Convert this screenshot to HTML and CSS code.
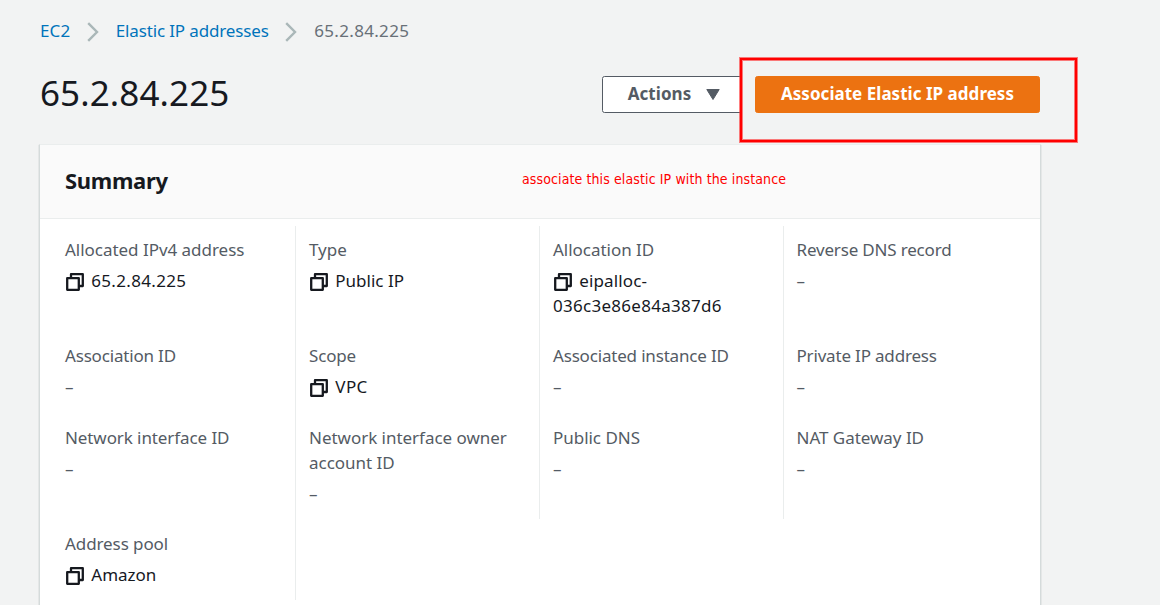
FILE: index.html
```html
<!DOCTYPE html>
<html lang="en">
<head>
<meta charset="utf-8">
<title>Elastic IP address</title>
<link rel="stylesheet" href="styles.css">
</head>
<body>
<svg class="defs" aria-hidden="true">
  <symbol id="copy" viewBox="0 0 18 18"><path d="M5 5V1.2H16.8V13H13M1.2 5.2H12.8V16.8H1.2Z" fill="none" stroke="#16191f" stroke-width="2.3" stroke-linejoin="round"/></symbol>
  <symbol id="chev" viewBox="0 0 12 20"><path d="M1.2 1.2L10 10L1.2 18.8" fill="none" stroke="#aab7b8" stroke-width="2.4"/></symbol>
</svg>
<main class="page">
  <nav class="crumbs">
    <a class="root">EC2</a><svg class="chev"><use href="#chev"/></svg>
    <a>Elastic IP addresses</a><svg class="chev"><use href="#chev"/></svg>
    <span class="current digits">65.2.84.225</span>
  </nav>
  <header class="head">
    <h1>65.2.84.225</h1>
    <div class="actions">
      <button class="btn"><span>Actions</span><svg class="caret" viewBox="0 0 14 11"><path d="M.8 .5H13.2L7 10.5Z" fill="#545b64" stroke="#545b64" stroke-linejoin="round"/></svg></button>
      <div class="target"><button class="btn primary"><span>Associate Elastic IP address</span></button><div class="highlight"></div></div>
    </div>
  </header>
  <section class="card">
    <div class="card-head"><h2>Summary</h2><p class="note">associate this elastic IP with the instance</p></div>
    <div class="grid">
      <div class="cell"><div class="label snug">Allocated IPv4 address</div><div class="value digits"><svg class="copy"><use href="#copy"/></svg>65.2.84.225</div></div>
      <div class="cell"><div class="label snug">Type</div><div class="value"><svg class="copy"><use href="#copy"/></svg>Public IP</div></div>
      <div class="cell"><div class="label snug">Allocation ID</div><div class="value"><svg class="copy"><use href="#copy"/></svg><span class="prefix">eipalloc-</span><br><span class="hash">036c3e86e84a387d6</span></div></div>
      <div class="cell"><div class="label">Reverse DNS record</div><div class="value dash">–</div></div>
      <div class="cell"><div class="label">Association ID</div><div class="value dash">–</div></div>
      <div class="cell"><div class="label">Scope</div><div class="value wide"><svg class="copy"><use href="#copy"/></svg>VPC</div></div>
      <div class="cell"><div class="label">Associated instance ID</div><div class="value dash">–</div></div>
      <div class="cell"><div class="label">Private IP address</div><div class="value dash">–</div></div>
      <div class="cell"><div class="label net">Network interface ID</div><div class="value dash">–</div></div>
      <div class="cell"><div class="label snug">Network interface owner<br>account ID</div><div class="value dash">–</div></div>
      <div class="cell"><div class="label snug">Public DNS</div><div class="value dash">–</div></div>
      <div class="cell"><div class="label snug">NAT Gateway ID</div><div class="value dash">–</div></div>
      <div class="cell"><div class="label net">Address pool</div><div class="value"><svg class="copy"><use href="#copy"/></svg>Amazon</div></div>
    </div>
  </section>
</main>
</body>
</html>
```
FILE: styles.css
```css
* { box-sizing: border-box; }
html, body { margin: 0; height: 605px; overflow: hidden; }
body { background: #f2f3f3; color: #16191f; font: 17px/25px "Noto Sans", "Open Sans", sans-serif; white-space: nowrap; }
.defs { display: none; }
.page { width: 1160px; padding: 18px 120px 0 40px; }
.crumbs { display: flex; align-items: center; height: 25px; color: #0073bb; letter-spacing: -.14px; }
.root { letter-spacing: .1px; }
.crumbs .current { color: #687078; }
.digits { letter-spacing: .32px; }
.chev { width: 12px; height: 20px; margin: 2px 17px 0 16.5px; }
.head { display: flex; justify-content: space-between; align-items: center; height: 37px; margin-top: 33px; }
h1 { margin: 0; padding-bottom: 3px; font-size: 35px; line-height: 44px; font-weight: 400; letter-spacing: .1px; }
.actions { display: flex; gap: 13px; }
.btn { display: flex; align-items: center; justify-content: center; height: 37px; width: 140px; padding: 0; border: 1px solid #545b64; border-radius: 2.5px; background: #fff; color: #545b64; font: 700 17px/25px "Noto Sans", sans-serif; letter-spacing: .07px; }
.btn span { padding-bottom: 2px; }
.caret { width: 14px; height: 11px; margin: 0 0 1px 15px; }
.btn:not(.primary) { padding-left: 4px; }
.primary { width: 285px; border-color: #ec7211; background: #ec7211; color: #fff; letter-spacing: .03px; }
.target { position: relative; }
.highlight { position: absolute; left: -15px; top: -18px; width: 337px; height: 84px; border: 2px solid #f00; box-shadow: 0 0 0 1px rgba(255,0,0,.5), inset 0 0 0 1px rgba(255,0,0,.5); }
.card { width: 1002px; height: 470px; margin: 31px 0 0 -1px; background: #fff; border: 1px solid #d5dbdb; border-top-color: #eaeded; box-shadow: 0 1px 1px rgba(0,28,36,.3); }
.card-head { display: flex; align-items: center; height: 74px; padding-left: 25px; background: #fafafa; border-bottom: 1px solid #eaeded; }
h2 { width: 457px; margin: 0; padding-bottom: 3px; font-size: 22px; line-height: 28px; letter-spacing: -.3px; }
.note { margin: -5px 0 0; color: #f00; font: 14px/20px "DejaVu Sans Condensed", "DejaVu Sans", sans-serif; letter-spacing: .11px; }
.grid { display: grid; grid-template-columns: 256px 244px 244px 256px; padding-top: 7px; }
.cell { padding: 10.5px 0 14.5px 13px; border-right: 1px solid #eaeded; }
.cell:nth-child(n+9) { padding-top: 11.5px; padding-bottom: 12.5px; }
.cell:last-child { padding-top: 12.25px; }
.cell:nth-child(4n+1) { padding-left: 25px; }
.cell:nth-child(4n) { border-right: 0; padding-left: 12.5px; }
.label { color: #545b64; letter-spacing: -.18px; }
.label.snug { letter-spacing: -.03px; }
.label.net { letter-spacing: -.09px; }
.value { margin-top: 6.25px; }
.copy { width: 18px; height: 18px; margin: 0 7.7px 0 .6px; vertical-align: -4px; }
.prefix { letter-spacing: .12px; }
.hash { letter-spacing: .28px; }
.wide { letter-spacing: .4px; }
.dash { color: #545b64; }
```
